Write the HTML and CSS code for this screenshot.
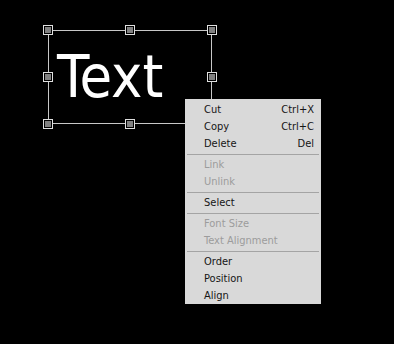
FILE: index.html
```html
<!DOCTYPE html>
<html>
<head>
  <meta charset="utf-8">
  <link rel="stylesheet" href="styles.css">
</head>
<body>
  <div class="canvas">
    <!-- selected text object -->
    <div class="selection">
      <span class="text-object">Text</span>
      <i class="handle h-tl"></i>
      <i class="handle h-tc"></i>
      <i class="handle h-tr"></i>
      <i class="handle h-ml"></i>
      <i class="handle h-mr"></i>
      <i class="handle h-bl"></i>
      <i class="handle h-bc"></i>
      <i class="handle h-br"></i>
    </div>

    <!-- context menu -->
    <ul class="context-menu">
      <li class="menu-item"><span>Cut</span><span class="shortcut">Ctrl+X</span></li>
      <li class="menu-item"><span>Copy</span><span class="shortcut">Ctrl+C</span></li>
      <li class="menu-item"><span>Delete</span><span class="shortcut">Del</span></li>
      <li class="separator"></li>
      <li class="menu-item disabled"><span>Link</span></li>
      <li class="menu-item disabled"><span>Unlink</span></li>
      <li class="separator"></li>
      <li class="menu-item"><span>Select</span></li>
      <li class="separator"></li>
      <li class="menu-item disabled"><span>Font Size</span></li>
      <li class="menu-item disabled"><span>Text Alignment</span></li>
      <li class="separator"></li>
      <li class="menu-item"><span>Order</span></li>
      <li class="menu-item"><span>Position</span></li>
      <li class="menu-item"><span>Align</span></li>
    </ul>
  </div>
</body>
</html>
```

FILE: styles.css
```css
/* Base */
html, body {
  margin: 0;
  background: #000;
}

.canvas {
  position: relative;
  width: 394px;
  height: 344px;
  overflow: hidden;
}

/* Selected text object */
.selection {
  position: absolute;
  left: 48px;
  top: 30px;
  width: 164px;
  height: 94px;
  border: 1px solid #c8c8c8;
  display: flex;
  align-items: center;
  padding-left: 8px;
  box-sizing: border-box;
}

.text-object {
  font-family: "DejaVu Sans Condensed", "DejaVu Sans", sans-serif;
  font-size: 59px;
  letter-spacing: 0;
  line-height: 1;
  color: #fff;
  margin-top: -1px;
}

.handle {
  position: absolute;
  width: 6px;
  height: 6px;
  background: #808080;
  border: 1px solid #000;
  outline: 1px solid #e0e0e0;
}

.h-tl { left: -5px; top: -5px; }
.h-tc { left: 77px; top: -5px; }
.h-tr { right: -5px; top: -5px; }
.h-ml { left: -5px; top: 42px; }
.h-mr { right: -5px; top: 42px; }
.h-bl { left: -5px; bottom: -5px; }
.h-bc { left: 77px; bottom: -5px; }
.h-br { right: -5px; bottom: -5px; }

/* Context menu */
.context-menu {
  position: absolute;
  left: 185px;
  top: 99px;
  width: 136px;
  margin: 0;
  padding: 2px 0 0;
  list-style: none;
  background: #d9d9d9;
  box-sizing: border-box;
  height: 205px;
  font-family: "DejaVu Sans Condensed", "DejaVu Sans", sans-serif;
  font-size: 11px;
  color: #151515;
}

.menu-item {
  display: flex;
  justify-content: space-between;
  align-items: center;
  height: 17px;
  padding: 0 7px 0 19px;
}

.menu-item.disabled {
  color: #9c9c9c;
}

.shortcut {
  color: #151515;
}

.separator {
  height: 1px;
  margin: 2px 2px 1px;
  background: #a4a4a4;
}
```
